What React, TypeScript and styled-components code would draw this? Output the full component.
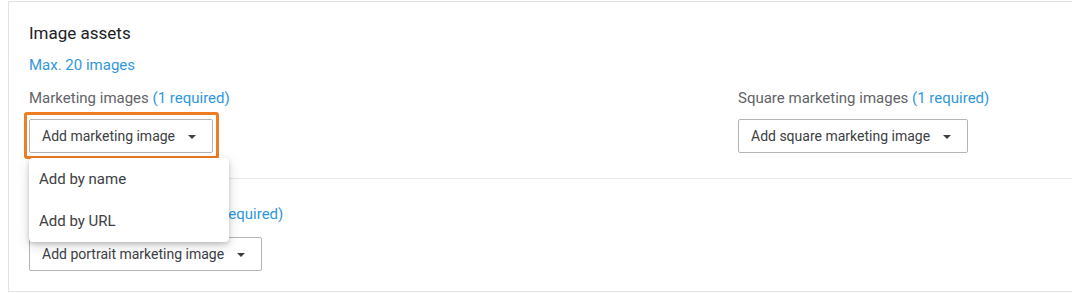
import React from "react";
import styled, { createGlobalStyle } from "styled-components";

const Global = createGlobalStyle`
  html, body { margin: 0; padding: 0; background: #fff; }
  body { font-family: Roboto, "Noto Sans", Arial, sans-serif; -webkit-font-smoothing: antialiased; }
  * { box-sizing: border-box; }
`;

const Panel = styled.div`
  margin: 1px 0 0 8px;
  border-top: 1px solid #e3e3e3;
  border-left: 1px solid #e3e3e3;
  border-bottom: 1px solid #e3e3e3;
  height: 291px;
  display: flex;
  flex-direction: column;
`;

const Section = styled.div<{ $top: number; $bottom: number; $divider?: boolean }>`
  margin-left: 20px;
  padding: ${(p) => p.$top}px 0 ${(p) => p.$bottom}px 0;
  border-bottom: ${(p) => (p.$divider ? "1px solid #e8e8e8" : "none")};
`;

const Title = styled.div`
  font-size: 17px;
  line-height: 24px;
  color: #202124;
`;

const Hint = styled.div`
  font-size: 15px;
  line-height: 20px;
  color: #2f97e0;
  margin-top: 10px;
`;

const Columns = styled.div<{ $top: number }>`
  display: grid;
  grid-template-columns: 709px 1fr;
  margin-top: ${(p) => p.$top}px;
`;

const Field = styled.div<{ $gap: number }>`
  display: flex;
  flex-direction: column;
  align-items: flex-start;
  gap: ${(p) => p.$gap}px;
`;

const Label = styled.div`
  font-size: 15px;
  line-height: 20px;
  color: #5f6368;
`;

const Req = styled.span`
  color: #2f97e0;
`;

const Anchor = styled.div`
  position: relative;
`;

const Button = styled.button<{ $h: number }>`
  display: flex;
  align-items: center;
  gap: 13px;
  height: ${(p) => p.$h}px;
  padding: 0 16px 0 12px;
  background: #fff;
  border: 1px solid #b4b4b4;
  border-radius: 2px;
  font-family: Roboto, "Noto Sans", Arial, sans-serif;
  font-size: 14px;
  color: #3c4043;
  cursor: pointer;
`;

const Caret = styled.span`
  width: 0;
  height: 0;
  border-left: 4px solid transparent;
  border-right: 4px solid transparent;
  border-top: 4px solid #3c4043;
  margin-top: 1px;
`;

const Highlight = styled.div`
  position: absolute;
  left: -5px;
  top: -7px;
  right: -6px;
  bottom: -6px;
  border: 3px solid #ee7d23;
  border-radius: 3px;
  pointer-events: none;
`;

const Menu = styled.div`
  position: absolute;
  left: 0;
  top: 39px;
  width: 200px;
  background: #fff;
  border-radius: 4px;
  box-shadow: 0 2px 4px rgba(0, 0, 0, 0.18), 0 4px 14px rgba(0, 0, 0, 0.14);
  z-index: 5;
  padding: 0;
`;

const MenuItem = styled.div`
  height: 42px;
  display: flex;
  align-items: center;
  padding-left: 10px;
  font-size: 15px;
  color: #3c4043;
`;

function Dropdown({ label, h }: { label: string; h: number }) {
  return (
    <Button $h={h}>
      <span>{label}</span>
      <Caret />
    </Button>
  );
}

export default function App() {
  return (
    <>
      <Global />
      <Panel>
        <Section $top={19} $bottom={25} $divider>
          <Title>Image assets</Title>
          <Hint>Max. 20 images</Hint>
          <Columns $top={13}>
            <Field $gap={11}>
              <Label>
                Marketing images <Req>(1 required)</Req>
              </Label>
              <Anchor>
                <Dropdown label="Add marketing image" h={34} />
                <Highlight />
                <Menu>
                  <MenuItem>Add by name</MenuItem>
                  <MenuItem>Add by URL</MenuItem>
                </Menu>
              </Anchor>
            </Field>
            <Field $gap={11}>
              <Label>
                Square marketing images <Req>(1 required)</Req>
              </Label>
              <Dropdown label="Add square marketing image" h={34} />
            </Field>
          </Columns>
        </Section>
        <Section $top={25} $bottom={0}>
          <Field $gap={13}>
            <Label>
              Portrait marketing images <Req>(1 required)</Req>
            </Label>
            <Dropdown label="Add portrait marketing image" h={34} />
          </Field>
        </Section>
      </Panel>
    </>
  );
}
